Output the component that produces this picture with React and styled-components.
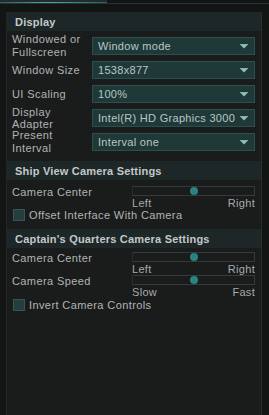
import React from "react";
import styled, { createGlobalStyle } from "styled-components";

const Global = createGlobalStyle`
    html, body {
        margin: 0;
        padding: 0;
        background: #131515;
        height: 100%;
    }
    #root {
        height: 100%;
    }
`;

const Page = styled.div`
    height: 415px;
    display: flex;
    flex-direction: column;
    font-family: "Liberation Sans", Arial, sans-serif;
    overflow: hidden;
`;

const TopBar = styled.div`
    height: 3px;
    border-bottom: 1px solid #233636;
    display: flex;
    flex-shrink: 0;
`;

const Tab = styled.div`
    width: 107px;
    background: #262a2a;
    position: relative;
    &::after {
        content: "";
        position: absolute;
        left: 0;
        right: 0;
        bottom: 0;
        height: 1px;
        background: linear-gradient(90deg, #2a5e5e 0%, #4aa8a8 45%, #2a5e5e 100%);
    }
`;

const Panel = styled.div`
    flex: 1;
    margin: 8px 7px 0 6px;
    background: #1a1c1c;
    border-left: 1px solid #222525;
    border-right: 1px solid #2a2d2d;
    display: flex;
    flex-direction: column;
`;

const SectionHeader = styled.div`
    height: 19px;
    flex-shrink: 0;
    background: #1d2727;
    color: #c4c8c8;
    font-weight: bold;
    font-size: 11px;
    letter-spacing: 0.2px;
    padding-left: 8px;
    display: flex;
    align-items: center;
    margin-top: ${({ top }) => top || 0}px;
`;

const SettingsList = styled.div`
    display: flex;
    flex-direction: column;
    gap: 6px;
    padding: 6px 6px 0 5px;
`;

const Row = styled.div`
    display: grid;
    grid-template-columns: 80px 1fr;
    align-items: center;
    height: 18px;
`;

const Label = styled.div`
    color: #b0b4b4;
    font-size: 11px;
    letter-spacing: 0.4px;
    line-height: ${({ tight }) => (tight ? 12 : 13)}px;
    height: 18px;
    display: flex;
    flex-direction: column;
    justify-content: center;
    white-space: nowrap;
`;

const Select = styled.div`
    height: 16px;
    background: #1e3937;
    border: 1px solid #2c4f4c;
    display: flex;
    align-items: center;
    justify-content: space-between;
    padding: 0 6px 0 5px;
    color: #b8c8c6;
    font-size: 11px;
    letter-spacing: 0.3px;
    white-space: nowrap;
`;

const Arrow = () => (
    <svg width="8" height="5" viewBox="0 0 8 5">
        <rect x="0" y="0" width="8" height="1" fill="#7fb1ad" />
        <polygon points="0.5,1 7.5,1 4,4.5" fill="#8fc0bc" />
    </svg>
);

const SliderRow = styled.div`
    display: grid;
    grid-template-columns: 120px 1fr;
    padding: 0 6px 0 5px;
    margin-top: ${({ top }) => top || 0}px;
`;

const SliderLabel = styled(Label)`
    height: auto;
    display: block;
`;

const SliderBox = styled.div`
    display: flex;
    flex-direction: column;
`;

const Track = styled.div`
    height: 8px;
    border: 1px solid #363a3a;
    border-left-color: #2a2d2d;
    position: relative;
`;

const Thumb = styled.div`
    position: absolute;
    top: 50%;
    width: 8px;
    height: 8px;
    border-radius: 50%;
    background: #2a8383;
    transform: translate(-50%, -50%);
`;

const Ends = styled.div`
    display: flex;
    justify-content: space-between;
    color: #a6aaaa;
    font-size: 11px;
    letter-spacing: 0.3px;
    line-height: 12px;
    padding-top: 1px;
`;

const CheckRow = styled.label`
    display: flex;
    align-items: center;
    gap: 4px;
    padding: 0 6px 0 6px;
    height: 12px;
    color: #b0b4b4;
    font-size: 11px;
    letter-spacing: 0.4px;
    margin-top: ${({ top }) => top || 0}px;
`;

const Box = styled.span`
    width: 10px;
    height: 10px;
    background: #243e3d;
    border: 1px solid #365453;
    flex-shrink: 0;
`;

const Section = styled.div`
    display: flex;
    flex-direction: column;
`;

const Slider = ({ label, pos, left, right, top }) => (
    <SliderRow top={top}>
        <SliderLabel>{label}</SliderLabel>
        <SliderBox>
            <Track>
                <Thumb style={{ left: `${pos * 100}%` }} />
            </Track>
            <Ends>
                <span>{left}</span>
                <span>{right}</span>
            </Ends>
        </SliderBox>
    </SliderRow>
);

const displayRows = [
    { label: ["Windowed or", "Fullscreen"], value: "Window mode" },
    { label: ["Window Size"], value: "1538x877" },
    { label: ["UI Scaling"], value: "100%" },
    { label: ["Display", "Adapter"], value: "Intel(R) HD Graphics 3000", tight: true },
    { label: ["Present", "Interval"], value: "Interval one" },
];

const App = () => {
    return (
        <Page>
            <Global />
            <TopBar>
                <Tab />
            </TopBar>
            <Panel>
                <SectionHeader>Display</SectionHeader>
                <SettingsList>
                    {displayRows.map((r) => (
                        <Row key={r.value}>
                            <Label tight={r.tight}>
                                {r.label.map((l) => (
                                    <div key={l}>{l}</div>
                                ))}
                            </Label>
                            <Select>
                                <span>{r.value}</span>
                                <Arrow />
                            </Select>
                        </Row>
                    ))}
                </SettingsList>

                <SectionHeader top={10}>Ship View Camera Settings</SectionHeader>
                <Section>
                    <Slider label="Camera Center" pos={0.5} left="Left" right="Right" top={6} />
                    <CheckRow>
                        <Box />
                        Offset Interface With Camera
                    </CheckRow>
                </Section>

                <SectionHeader top={8}>Captain's Quarters Camera Settings</SectionHeader>
                <Section>
                    <Slider label="Camera Center" pos={0.5} left="Left" right="Right" top={4} />
                    <Slider label="Camera Speed" pos={0.5} left="Slow" right="Fast" top={0} />
                    <CheckRow top={1}>
                        <Box />
                        Invert Camera Controls
                    </CheckRow>
                </Section>
            </Panel>
        </Page>
    );
};

export default App;
